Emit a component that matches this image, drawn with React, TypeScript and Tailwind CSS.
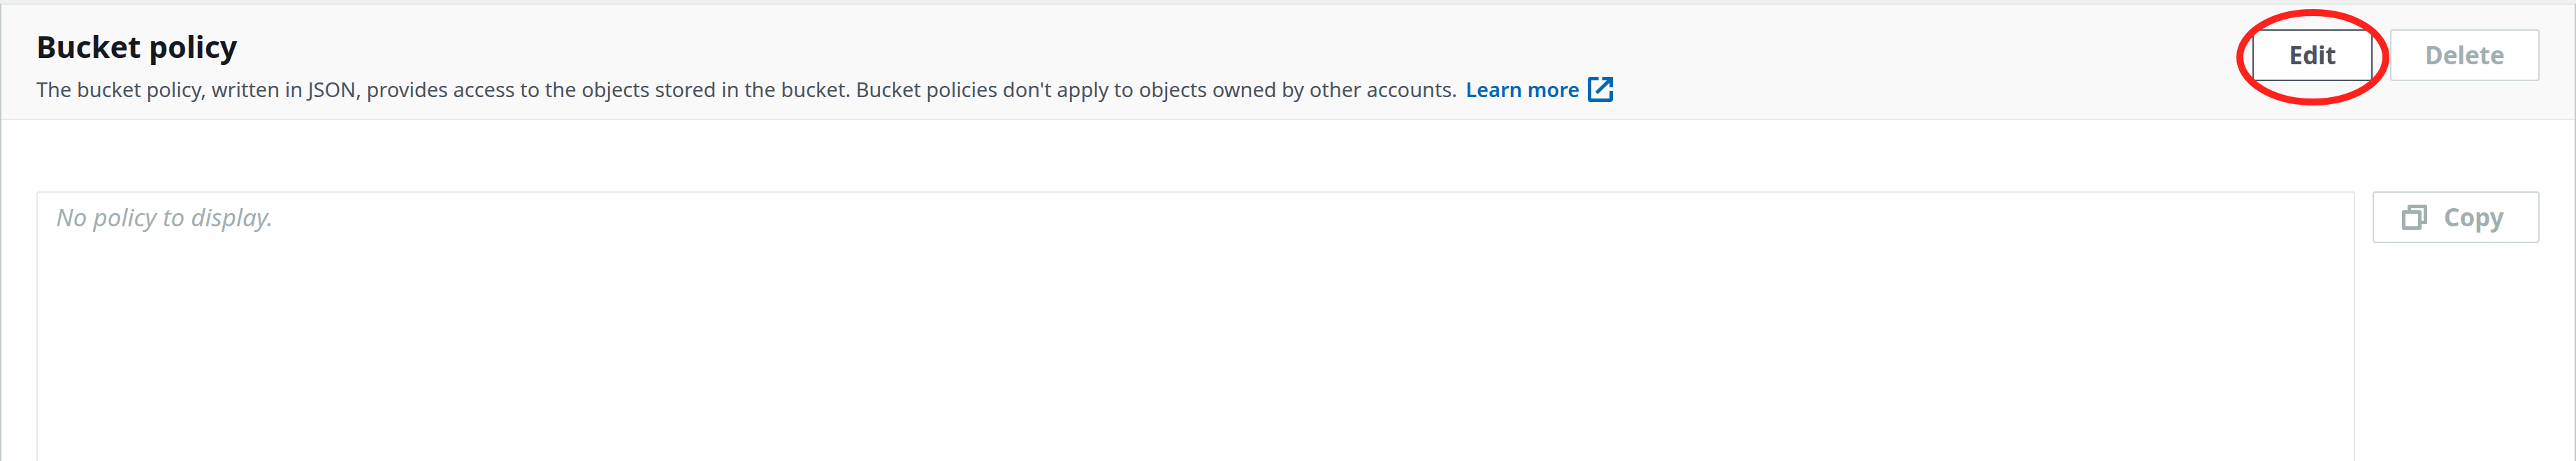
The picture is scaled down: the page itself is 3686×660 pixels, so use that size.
import React from "react";

function ExternalIcon() {
  return (
    <svg viewBox="0 0 36 36" className="h-9 w-9 shrink-0" fill="none" stroke="currentColor" aria-hidden="true">
      <path d="M15.500 2.500H4Q2.500 2.500 2.500 4V32Q2.500 33.500 4 33.500H32Q33.500 33.500 33.500 32V20" strokeWidth="5" />
      <path d="M20.500 2.500H33.500V15" strokeWidth="5" />
      <path d="M12.500 23L32 4" strokeWidth="5" />
    </svg>
  );
}

function CopyIcon() {
  return (
    <svg viewBox="0 0 36 36" className="h-9 w-9 shrink-0" fill="none" stroke="currentColor" strokeWidth="5" strokeLinejoin="round" aria-hidden="true">
      <path d="M10.500 8V2.500H33.500V25.500H28" />
      <path d="M2.500 10.500H25.500V33.500H2.500Z" />
    </svg>
  );
}

const buttonBase =
  "flex h-[74px] items-center rounded-[4px] border-2 bg-white text-[35px] leading-[44px] font-bold";

export default function App() {
  return (
    <main className="flex min-h-screen flex-col bg-[#eff1f1] pt-[5px] font-['Noto_Sans',sans-serif]">
      <section className="flex flex-1 flex-col border-x-2 border-t-2 border-t-[#e6eaea] border-x-[#c3cbcb] bg-white">
        <header className="flex items-start justify-between border-b-2 border-[#e6eaea] bg-[#f9f9f9] px-[50px] pt-[35px] pb-[18px]">
          <div>
            <h2 className="text-[43px] leading-[50px] font-bold text-[#16191f]">Bucket policy</h2>
            <p className="mt-3 flex items-center text-[29px] leading-[48px] text-[#4b535d]">
              <span>
                The bucket policy, written in JSON, provides access to the objects stored in the bucket. Bucket
                policies don't apply to objects owned by other accounts.
              </span>
              <a href="#learn-more" className="ml-3 flex items-center gap-3 font-semibold text-[#0069b4]">
                Learn more
                <ExternalIcon />
              </a>
            </p>
          </div>
          <div className="flex gap-[25px]">
            <div className="relative">
              <button type="button" className={`${buttonBase} w-[172px] justify-center border-[#4b535d] text-[#4b535d]`}>
                Edit
              </button>
              <svg
                viewBox="0 0 220 138"
                className="pointer-events-none absolute -top-[29px] -left-[23px] h-[138px] w-[220px]"
                fill="none"
                aria-hidden="true"
              >
                <ellipse cx="109.500" cy="69" rx="104.500" ry="64" stroke="#ff211c" strokeWidth="10" />
              </svg>
            </div>
            <button type="button" disabled className={`${buttonBase} w-[214px] justify-center border-[#cfd8d7] text-[#a1afb0]`}>
              Delete
            </button>
          </div>
        </header>
        <div className="flex flex-1 items-stretch gap-[25px] px-[50px] pt-[102px]">
          <textarea
            readOnly
            aria-label="Bucket policy document"
            placeholder="No policy to display."
            className="flex-1 resize-none rounded-t-[4px] border-2 border-b-0 border-[#e6eaea] bg-white px-[26px] py-[10px] text-[35px] leading-[50px] italic outline-none placeholder:text-[#a1afb0]"
          />
          <button type="button" disabled className={`${buttonBase} w-[239px] gap-6 border-[#cfd8d7] pl-10 text-[#a1afb0]`}>
            <CopyIcon />
            Copy
          </button>
        </div>
      </section>
    </main>
  );
}
